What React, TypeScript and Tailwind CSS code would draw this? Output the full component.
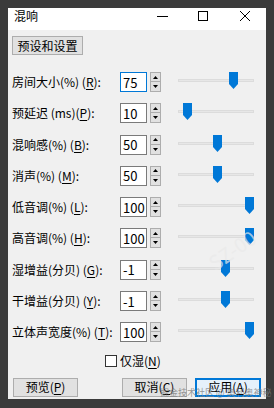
const rows: { label: string; key: string; post: string; value: string; thumb: number; focused?: boolean }[] = [
  { label: "房间大小(%) (", key: "R", post: "):", value: "75", thumb: 233, focused: true },
  { label: "预延迟 (ms)(", key: "P", post: "):", value: "10", thumb: 187 },
  { label: "混响感(%) (", key: "B", post: "):", value: "50", thumb: 217 },
  { label: "消声(%) (", key: "M", post: "):", value: "50", thumb: 217 },
  { label: "低音调(%) (", key: "L", post: "):", value: "100", thumb: 249 },
  { label: "高音调(%) (", key: "H", post: "):", value: "100", thumb: 249 },
  { label: "湿增益(分贝) (", key: "G", post: "):", value: "-1", thumb: 225 },
  { label: "干增益(分贝) (", key: "Y", post: "):", value: "-1", thumb: 225 },
  { label: "立体声宽度(%) (", key: "T", post: "):", value: "100", thumb: 249 },
];

const font = { fontFamily: '"Noto Sans CJK SC", "Liberation Sans", sans-serif' };

function Spin() {
  return (
    <div className="ml-[3px] flex h-[20px] w-[11px] flex-col">
      <div className="flex h-[10px] items-center justify-center border border-[#adadad] bg-[#e1e1e1]">
        <svg width="5" height="3" viewBox="0 0 5 3">
          <path d="M2.5 0 L5 3 H0 Z" fill="#000" />
        </svg>
      </div>
      <div className="flex h-[10px] items-center justify-center border border-t-0 border-[#adadad] bg-[#e1e1e1]">
        <svg width="5" height="3" viewBox="0 0 5 3">
          <path d="M0 0 H5 L2.5 3 Z" fill="#000" />
        </svg>
      </div>
    </div>
  );
}

function Slider({ thumb }: { thumb: number }) {
  return (
    <div className="relative ml-[17px] h-[20px] w-[76px]">
      <div className="absolute left-0 right-0 top-[7px] h-[3px] border border-[#dcdcdc] bg-[#e7e7e7]" />
      <svg
        className="absolute top-0"
        style={{ left: thumb - 178 - 4.5 }}
        width="9"
        height="17"
        viewBox="0 0 9 17"
      >
        <path d="M0 0 H9 V12 L4.5 17 L0 12 Z" fill="#0078d7" />
      </svg>
    </div>
  );
}

export default function App() {
  return (
    <div className="relative h-[408px] w-[274px] overflow-hidden bg-[#3b3b3b] pl-[8px] pt-[8px]" style={font}>
      <div className="flex h-[391px] w-[258px] flex-col bg-[#f0f0f0]">
        <div className="flex h-[22px] items-center bg-white pb-[6px] text-[12px] text-black">
          <span className="ml-[6px] flex-1 leading-none">混响</span>
          <svg className="mr-[30px]" width="11" height="1" viewBox="0 0 11 1">
            <rect width="11" height="1" fill="#000" />
          </svg>
          <svg className="mr-[32px]" width="10" height="10" viewBox="0 0 10 10">
            <rect x="0.5" y="0.5" width="9" height="9" fill="none" stroke="#000" />
          </svg>
          <svg className="mr-[16px]" width="10" height="10" viewBox="0 0 10 10">
            <path d="M0 0 L10 10 M10 0 L0 10" stroke="#000" strokeWidth="1" />
          </svg>
        </div>

        <div className="flex flex-1 flex-col pl-[4px] text-[12px] text-black">
          <button className="mt-[6px] flex h-[19px] w-[71px] items-center justify-center border border-[#adadad] bg-[#e1e1e1] leading-none">
            预设和设置
          </button>

          <div className="mt-[17px] flex flex-col">
            {rows.map((r) => (
              <div key={r.key} className="flex h-[31.3px] items-start">
                <div className="flex h-[20px] w-[108px] items-center whitespace-nowrap leading-none">
                  {r.label}
                  <span className="underline underline-offset-2">{r.key}</span>
                  {r.post}
                </div>
                <div
                  className={`flex h-[20px] w-[27px] items-center border bg-white pl-[2px] text-[13px] leading-none ${
                    r.focused ? "border-[#0078d7]" : "border-[#7a7a7a]"
                  }`}
                >
                  {r.value}
                </div>
                <Spin />
                <Slider thumb={r.thumb} />
              </div>
            ))}
          </div>

          <div className="mt-[1px] flex items-center pl-[93px]">
            <div className="h-[12px] w-[12px] border border-[#333] bg-white" />
            <span className="ml-[3px] leading-none">
              仅湿(<span className="underline underline-offset-2">N</span>)
            </span>
          </div>

          <div className="mt-[11px] flex items-center">
            <button className="ml-[1px] flex h-[19px] w-[65px] items-center justify-center border border-[#adadad] bg-[#e1e1e1] leading-none">
              预览(<span className="underline underline-offset-2">P</span>)
            </button>
            <button className="ml-[44px] flex h-[19px] w-[65px] items-center justify-center border border-[#adadad] bg-[#e1e1e1] leading-none">
              取消(<span className="underline underline-offset-2">C</span>)
            </button>
            <button className="ml-[8px] flex h-[19px] w-[66px] items-center justify-center border-2 border-[#0078d7] bg-[#e5f1fb] leading-none">
              应用(<span className="underline underline-offset-2">A</span>)
            </button>
          </div>
        </div>
      </div>

      <span className="pointer-events-none absolute left-[160px] top-[388px] whitespace-nowrap text-[9px] leading-none text-[#7d7d7d]/80">
        掘金技术社区 @ 奥利奥神秘
      </span>
      <span className="pointer-events-none absolute left-[206px] top-[240px] -rotate-[35deg] whitespace-nowrap text-[20px] leading-none text-[#e9e9e9]/70">
        SZ-00
      </span>
    </div>
  );
}
